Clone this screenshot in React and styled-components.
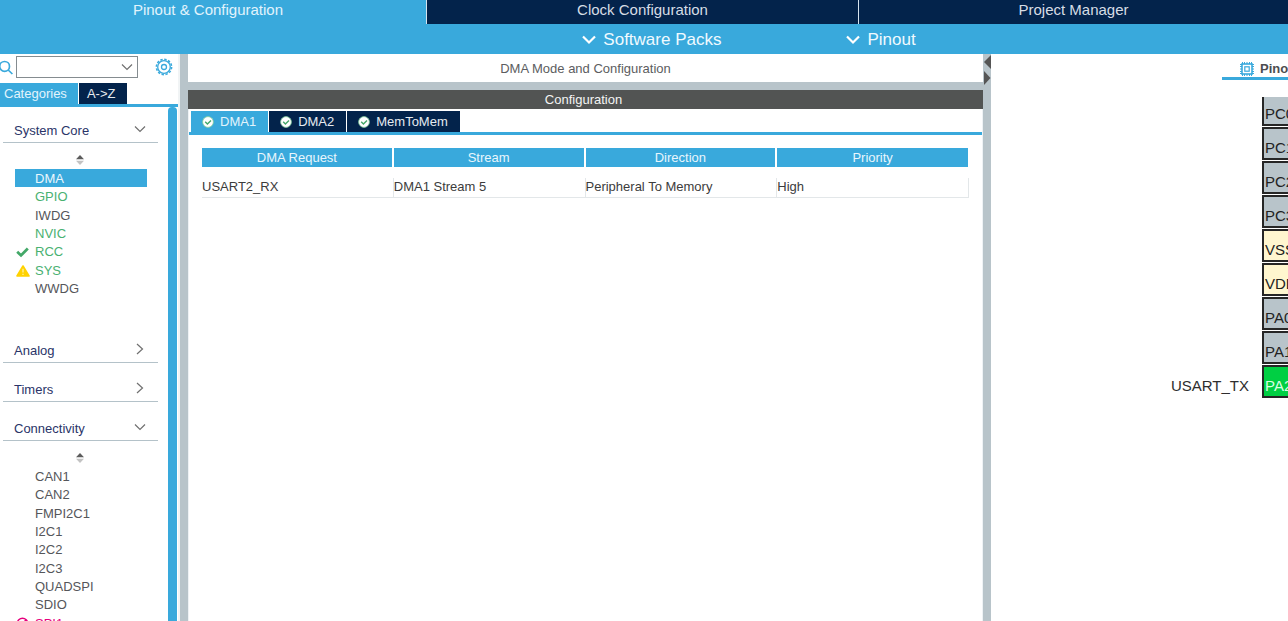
import React from "react";
import styled, { createGlobalStyle } from "styled-components";

const blue = "#39a9dc";
const navy = "#03234b";
const steel = "#b8c4ca";
const slate = "#525453";
const green = "#49b171";
const pink = "#e6007e";

const GlobalStyle = createGlobalStyle`
  *, *::before, *::after { box-sizing: border-box; }
  body {
    margin: 0;
    background: #fff;
    color: #464646;
    font-family: "Liberation Sans", Arial, sans-serif;
    font-size: 13px;
    line-height: 18px;
  }
  button, select { font: inherit; color: inherit; }
  button { margin: 0; padding: 0; border: 0; background: none; cursor: pointer; }
  ul { list-style: none; margin: 0; padding: 0; }
  h1, h2 { margin: 0; font-size: inherit; font-weight: normal; }
`;

const Window = styled.div`
  display: flex;
  flex-direction: column;
  height: 100vh;
  overflow: hidden;
`;

const MainTabs = styled.nav`
  display: grid;
  grid-template-columns: 426fr 432fr 430fr;
  flex: none;
  height: 24px;
  background: ${blue};
`;

const MainTab = styled.button`
  padding: 0 ${(p) => (p.$active ? 10 : 0)}px 5px 0;
  border-left: ${(p) => (p.$active ? "0" : "1px solid #d5e3ee")};
  background: ${(p) => (p.$active ? blue : navy)};
  color: ${(p) => (p.$active ? "#e2f4fc" : "#d6dde5")};
  font-size: 15px;
  line-height: 18px;
`;

const MenuBar = styled.div`
  display: flex;
  flex: none;
  justify-content: center;
  gap: 125px;
  height: 30px;
  padding-left: 210px;
  background: ${blue};
`;

const MenuButton = styled.button`
  display: flex;
  align-items: center;
  gap: 7px;
  padding-top: 2px;
  color: #f0faff;
  font-size: 17px;
  line-height: 20px;
`;

const Workspace = styled.div`
  display: grid;
  grid-template-columns: 180px 8px minmax(0, 1fr) 8px 297px;
  flex: 1;
  min-height: 0;
`;

const Splitter = styled.div`
  display: flex;
  flex-direction: column;
  align-items: center;
  background: ${steel};
`;

const SplitterButton = styled.button`
  height: 16px;
  line-height: 0;
`;

const Sidebar = styled.aside`
  display: flex;
  flex-direction: column;
  min-height: 0;
  border-right: 2px solid #f1f4f5;
`;

const SearchRow = styled.div`
  display: flex;
  align-items: center;
  flex: none;
  height: 29px;
  padding-bottom: 3px;

  > svg { flex: none; }
`;

const ComboLabel = styled.label`
  display: grid;
  align-items: center;
  width: 122px;
  margin: 0 17px 0 3px;

  > * { grid-area: 1 / 1; }
  > svg { justify-self: end; margin-right: 5px; pointer-events: none; }
`;

const Combo = styled.select`
  appearance: none;
  width: 100%;
  height: 22px;
  border: 1px solid #858c90;
  border-radius: 0;
  background: #fff;
`;

const SettingsButton = styled.button`
  display: flex;
`;

const TabStrip = styled.div`
  display: flex;
  flex: none;
  gap: 1px;
  height: 24px;
  padding-left: ${(p) => p.$inset || 0}px;
  border-bottom: 3px solid ${blue};
`;

const Tab = styled.button`
  display: flex;
  align-items: center;
  gap: 6px;
  padding: ${(p) => p.$padding};
  background: ${(p) => (p.$active ? blue : navy)};
  color: ${(p) => (p.$active ? "#e2f4fc" : "#e6ebf0")};
`;

const SideScroll = styled.div`
  display: flex;
  flex: 1;
  min-height: 0;
  overflow: hidden;
`;

const SideContent = styled.div`
  flex: 1;
  padding: 0 10px 0 3px;
`;

const ScrollThumb = styled.div`
  width: 9px;
  margin-right: 1px;
  border-radius: 4px 4px 0 0;
  background: ${blue};
`;

const Section = styled.section`
  & + & { margin-top: 3px; }
`;

const SectionHeader = styled.button`
  display: flex;
  align-items: center;
  justify-content: space-between;
  width: 100%;
  height: 36px;
  padding: 12px 12px 0 11px;
  border-bottom: 1px solid #b4c2c9;
  color: #2a3468;

  > svg { margin-bottom: 4px; }
`;

const SortRow = styled.div`
  display: flex;
  align-items: flex-end;
  justify-content: center;
  height: 26px;
  padding: 0 2px 4px 0;
`;

const ItemList = styled.ul`
  display: flex;
  flex-direction: column;
  height: ${(p) => p.$height}px;
  margin: 0 11px 0 12px;
`;

const SectionBody = styled.div`
  padding-bottom: 27px;
`;

const Item = styled.li`
  display: flex;
  flex: 1;
  background: ${(p) => (p.$selected ? blue : "transparent")};
`;

const itemColors = { normal: "#55565a", on: green, error: pink, selected: "#eaf7fd" };

const ItemButton = styled.button`
  display: grid;
  grid-template-columns: 20px 1fr;
  align-items: center;
  flex: 1;
  padding-top: 2px;
  line-height: 16px;
  text-align: left;
  color: ${(p) => itemColors[p.$state]};
`;

const IconSlot = styled.span`
  display: flex;
  padding-left: 1px;
`;

const Center = styled.main`
  display: flex;
  flex-direction: column;
  min-width: 0;
`;

const PanelTitle = styled.h1`
  height: 36px;
  padding: 6px 0 0;
  border-bottom: 8px solid ${steel};
  text-align: center;
  color: #5c5d60;
`;

const ConfigTitle = styled.h2`
  height: 19px;
  padding: 1px 4px 0 0;
  background: ${slate};
  color: #f4f4f4;
  text-align: center;
`;

const ConfigBody = styled.div`
  flex: 1;
  padding-top: 2px;
  border-left: 1px solid #eef2f5;
  border-right: 1px solid #eef2f5;
`;

const RequestTable = styled.table`
  width: calc(100% - 26px);
  margin: 13px 13px 0;
  table-layout: fixed;
  border-spacing: 0;
  color: #3c3c3c;

  tbody::before { content: ""; display: block; height: 11px; }
  th {
    height: 19px;
    padding: 1px 0 0;
    border-right: 2px solid #fff;
    background: ${blue};
    color: #e8f6fd;
    font-weight: normal;
  }
  th:last-child { border-right-width: 1px; }
  td {
    height: 20px;
    padding: 0 0 1px;
    border-right: 1px solid #e3e7e9;
    border-bottom: 1px solid #e3e7e9;
  }
`;

const PinoutPane = styled.section`
  display: flex;
  flex-direction: column;
  min-width: 0;
  overflow: hidden;
`;

const ViewTab = styled.button`
  display: flex;
  flex: none;
  align-items: center;
  gap: 5px;
  height: 26px;
  margin-left: 231px;
  padding: 6px 0 0 17px;
  border-bottom: 3px solid ${blue};
  color: #4c4d50;
  font-weight: bold;
  white-space: nowrap;

  > svg { flex: none; }
`;

const Chip = styled.div`
  display: flex;
  flex-direction: column;
  justify-content: flex-end;
  flex: none;
  height: 302px;
  margin-top: 17px;
  overflow: hidden;
`;

const PinRow = styled.div`
  display: grid;
  grid-template-columns: 258px 1fr;
  column-gap: 13px;
  flex: none;
  height: 34px;
  color: #2e2e2e;
  font-size: 15px;
  line-height: 18px;
`;

const PinSignal = styled.span`
  padding-top: 12px;
  text-align: right;
`;

const pinColors = { io: steel, power: "#fff6cf", active: "#00cf43" };

const Pin = styled.button`
  height: 33px;
  padding: 8px 0 0 1px;
  border: 2px solid #262626;
  border-right: 0;
  background: ${(p) => pinColors[p.$kind]};
  color: ${(p) => (p.$kind === "active" ? "#d9ffe4" : "#222")};
  text-align: left;
  white-space: nowrap;
`;

const Chevron = ({ right }) => (
  <svg width="12" height="12" viewBox="0 0 12 12" fill="none" stroke="#707070" strokeWidth="1.2" aria-hidden="true">
    <path d={right ? "M3 1 8.5 6 3 11" : "M1 3.5 6 8.5 11 3.5"} />
  </svg>
);

const MenuChevron = () => (
  <svg width="14" height="10" viewBox="0 0 14 10" fill="none" stroke="#fff" strokeWidth="2.2" aria-hidden="true">
    <path d="M1 1.5 7 7.5 13 1.5" />
  </svg>
);

const SearchIcon = () => (
  <svg width="13" height="16" viewBox="0 0 13 16" fill="none" stroke={blue} strokeWidth="1.7" aria-hidden="true">
    <circle cx="4.6" cy="7.4" r="4.9" />
    <path d="M8.2 11 12.4 15" />
  </svg>
);

const GearIcon = () => (
  <svg width="18" height="18" viewBox="0 0 18 18" fill="none" stroke={blue} aria-hidden="true">
    <circle cx="9" cy="9" r="6.3" strokeWidth="1.3" />
    <circle cx="9" cy="9" r="7.6" strokeWidth="1.6" strokeDasharray="2.4 1.58" />
    <circle cx="9" cy="9" r="2.5" strokeWidth="1.3" />
  </svg>
);

const SortIcon = () => (
  <svg width="8" height="10" viewBox="0 0 8 10" aria-hidden="true">
    <path d="M0 4.3 4 0 8 4.3z" fill="#5c5c5c" />
    <path d="M0 5.8 4 10 8 5.8z" fill="#c3c3c3" />
  </svg>
);

const CheckIcon = () => (
  <svg width="13" height="11" viewBox="0 0 13 11" fill="none" stroke="#43a868" strokeWidth="2.8" aria-hidden="true">
    <path d="M1.2 4.8 5 8.4 11.8 1.6" />
  </svg>
);

const WarningIcon = () => (
  <svg width="14" height="12" viewBox="0 0 14 12" aria-hidden="true">
    <path d="M7 1 13 11H1z" fill="#ffd200" stroke="#ffd200" strokeWidth="1.6" strokeLinejoin="round" />
    <path d="M7 3.8V7.6M7 8.8V10" stroke="#fff3b0" strokeWidth="1.2" />
  </svg>
);

const ForbiddenIcon = () => (
  <svg width="13" height="13" viewBox="0 0 13 13" fill="none" stroke={pink} strokeWidth="1.5" aria-hidden="true">
    <circle cx="6.5" cy="6.5" r="5.2" />
    <path d="M10.2 2.8 2.8 10.2" />
  </svg>
);

const OkIcon = () => (
  <svg width="12" height="12" viewBox="0 0 12 12" aria-hidden="true">
    <circle cx="6" cy="6" r="5.4" fill="#fff" stroke="#7fcb9a" strokeWidth="0.8" />
    <path d="M3.2 5.8 5.4 8 9 4.4" fill="none" stroke="#43a868" strokeWidth="1.4" />
  </svg>
);

const ChipIcon = () => (
  <svg width="16" height="16" viewBox="0 0 16 16" fill="none" stroke={blue} aria-hidden="true">
    <path
      d="M3.5 1V3M5.5 1V3M8 1V3M10.5 1V3M12.5 1V3M3.5 13V15M5.5 13V15M8 13V15M10.5 13V15M12.5 13V15M1 3.5H3M1 5.5H3M1 8H3M1 10.5H3M1 12.5H3M13 3.5H15M13 5.5H15M13 8H15M13 10.5H15M13 12.5H15"
      strokeWidth="1"
    />
    <rect x="3" y="3" width="10" height="10" strokeWidth="1.6" />
    <rect x="5.8" y="5.8" width="4.4" height="4.4" strokeWidth="1.2" />
  </svg>
);

const SplitArrow = ({ right }) => (
  <svg width="8" height="14" viewBox="0 0 8 14" fill="#555" aria-hidden="true">
    <path d={right ? "M1 0 7.5 7 1 14z" : "M8 0 1 7 8 14z"} />
  </svg>
);

const icons = { check: CheckIcon, warning: WarningIcon, forbidden: ForbiddenIcon };

const sections = [
  {
    title: "System Core",
    height: 128,
    items: [
      { name: "DMA", state: "selected" },
      { name: "GPIO", state: "on" },
      { name: "IWDG" },
      { name: "NVIC", state: "on" },
      { name: "RCC", state: "on", icon: "check" },
      { name: "SYS", state: "on", icon: "warning" },
      { name: "WWDG" },
    ],
  },
  { title: "Analog" },
  { title: "Timers" },
  {
    title: "Connectivity",
    height: 165,
    items: [
      { name: "CAN1" },
      { name: "CAN2" },
      { name: "FMPI2C1" },
      { name: "I2C1" },
      { name: "I2C2" },
      { name: "I2C3" },
      { name: "QUADSPI" },
      { name: "SDIO" },
      { name: "SPI1", state: "error", icon: "forbidden" },
    ],
  },
];

const pins = [
  { name: "PC0", kind: "io" },
  { name: "PC1", kind: "io" },
  { name: "PC2", kind: "io" },
  { name: "PC3", kind: "io" },
  { name: "VSSA", kind: "power" },
  { name: "VDDA", kind: "power" },
  { name: "PA0", kind: "io" },
  { name: "PA1", kind: "io" },
  { name: "PA2", kind: "active", signal: "USART_TX" },
];

const columns = ["DMA Request", "Stream", "Direction", "Priority"];
const requests = [["USART2_RX", "DMA1 Stream 5", "Peripheral To Memory", "High"]];

function PeripheralItem({ item }) {
  const state = item.state || "normal";
  const Icon = icons[item.icon];
  return (
    <Item $selected={state === "selected"}>
      <ItemButton $state={state}>
        <IconSlot>{Icon && <Icon />}</IconSlot>
        {item.name}
      </ItemButton>
    </Item>
  );
}

function PeripheralSection({ section }) {
  return (
    <Section>
      <SectionHeader aria-expanded={Boolean(section.items)}>
        {section.title}
        <Chevron right={!section.items} />
      </SectionHeader>
      {section.items && (
        <SectionBody>
          <SortRow>
            <SortIcon />
          </SortRow>
          <ItemList $height={section.height}>
            {section.items.map((item) => (
              <PeripheralItem key={item.name} item={item} />
            ))}
          </ItemList>
        </SectionBody>
      )}
    </Section>
  );
}

export default function App() {
  return (
    <Window>
      <GlobalStyle />
      <MainTabs>
        <MainTab $active>Pinout &amp; Configuration</MainTab>
        <MainTab>Clock Configuration</MainTab>
        <MainTab>Project Manager</MainTab>
      </MainTabs>
      <MenuBar>
        <MenuButton>
          <MenuChevron />
          Software Packs
        </MenuButton>
        <MenuButton>
          <MenuChevron />
          Pinout
        </MenuButton>
      </MenuBar>
      <Workspace>
        <Sidebar>
          <SearchRow>
            <SearchIcon />
            <ComboLabel>
              <Combo aria-label="Search peripherals" />
              <Chevron />
            </ComboLabel>
            <SettingsButton aria-label="Settings">
              <GearIcon />
            </SettingsButton>
          </SearchRow>
          <TabStrip>
            <Tab $active $padding="0 11px 0 4px">Categories</Tab>
            <Tab $padding="0 12px 0 8px">A-&gt;Z</Tab>
          </TabStrip>
          <SideScroll>
            <SideContent>
              {sections.map((section) => (
                <PeripheralSection key={section.title} section={section} />
              ))}
            </SideContent>
            <ScrollThumb />
          </SideScroll>
        </Sidebar>
        <Splitter />
        <Center>
          <PanelTitle>DMA Mode and Configuration</PanelTitle>
          <ConfigTitle>Configuration</ConfigTitle>
          <ConfigBody>
            <TabStrip $inset={2}>
              {["DMA1", "DMA2", "MemToMem"].map((name, i) => (
                <Tab key={name} $active={i === 0} $padding="0 12px 0 11px">
                  <OkIcon />
                  {name}
                </Tab>
              ))}
            </TabStrip>
            <RequestTable>
              <thead>
                <tr>
                  {columns.map((name) => (
                    <th key={name} scope="col">{name}</th>
                  ))}
                </tr>
              </thead>
              <tbody>
                {requests.map((row) => (
                  <tr key={row[0]}>
                    {row.map((value) => (
                      <td key={value}>{value}</td>
                    ))}
                  </tr>
                ))}
              </tbody>
            </RequestTable>
          </ConfigBody>
        </Center>
        <Splitter>
          <SplitterButton aria-label="Collapse left">
            <SplitArrow />
          </SplitterButton>
          <SplitterButton aria-label="Collapse right">
            <SplitArrow right />
          </SplitterButton>
        </Splitter>
        <PinoutPane>
          <ViewTab>
            <ChipIcon />
            Pinout view
          </ViewTab>
          <Chip>
            {pins.map((pin) => (
              <PinRow key={pin.name}>
                <PinSignal>{pin.signal}</PinSignal>
                <Pin $kind={pin.kind}>{pin.name}</Pin>
              </PinRow>
            ))}
          </Chip>
        </PinoutPane>
      </Workspace>
    </Window>
  );
}
